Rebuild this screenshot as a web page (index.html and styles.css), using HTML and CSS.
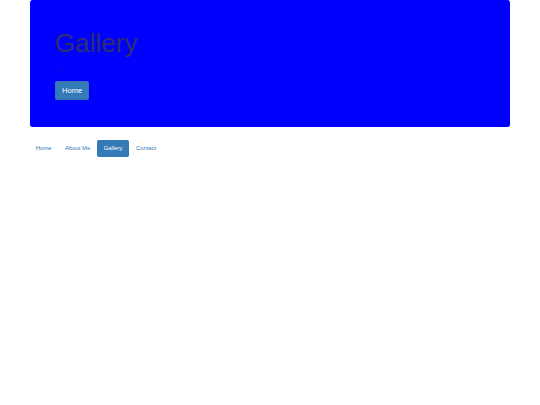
FILE: index.html
```html
<!DOCTYPE html>
<html lang="en">
<head>
<meta charset="utf-8">
<title>Gallery</title>
<link rel="stylesheet" href="styles.css">
</head>
<body>
  <div class="container">
    <div class="jumbotron">
      <h1 class="title">Gallery</h1>
      <p class="lead">...</p>
      <p class="actions"><a class="btn btn-primary" href="#">Home</a></p>
    </div>
  </div>
  <div class="container">
    <ul class="nav-pills">
      <li><a href="#">Home</a></li>
      <li><a href="#">About Me</a></li>
      <li class="active"><a href="#">Gallery</a></li>
      <li><a href="#">Contact</a></li>
    </ul>
  </div>
</body>
</html>
```

FILE: styles.css
```css
* { box-sizing: border-box; }

html, body {
  margin: 0;
  padding: 0;
  background: #fff;
}

body {
  font-family: "Liberation Sans", Arial, Helvetica, sans-serif;
  font-size: 5.9px;
  line-height: 1.42857;
  color: #333;
}

.container {
  max-width: 493.6px;
  margin: 0 auto;
  padding: 0 6.33px;
}

.jumbotron {
  background: #0000ff;
  border-radius: 2.53px;
  padding: 20.25px 25.3px;
  margin-bottom: 12.66px;
  color: #2f2f6b;
}

.title {
  font-size: 26.1px;
  line-height: 29.24px;
  font-weight: 500;
  margin: 8.6px 0 4.22px;
}

.jumbotron p {
  font-size: 8.86px;
  line-height: 12.66px;
  margin: 0 0 6.33px;
}

.lead {
  color: #222250;
}

.btn {
  display: inline-block;
  font-size: 7.59px;
  line-height: 1.3333;
  padding: 4.5px 7.17px;
  border-radius: 2.53px;
  text-decoration: none;
  vertical-align: middle;
}

.btn-primary {
  background: #337ab7;
  color: #fff;
  box-shadow: inset 0 0 0 0.42px #2e6da4;
}

.nav-pills {
  list-style: none;
  margin: 0;
  padding: 0;
  display: flex;
  gap: 0.84px;
}

.nav-pills a {
  display: block;
  padding: 4.22px 6.33px;
  line-height: 8.44px;
  font-size: 5.9px;
  color: #337ab7;
  text-decoration: none;
  border-radius: 1.69px;
}

.nav-pills .active a {
  background: #337ab7;
  color: #fff;
}
```
